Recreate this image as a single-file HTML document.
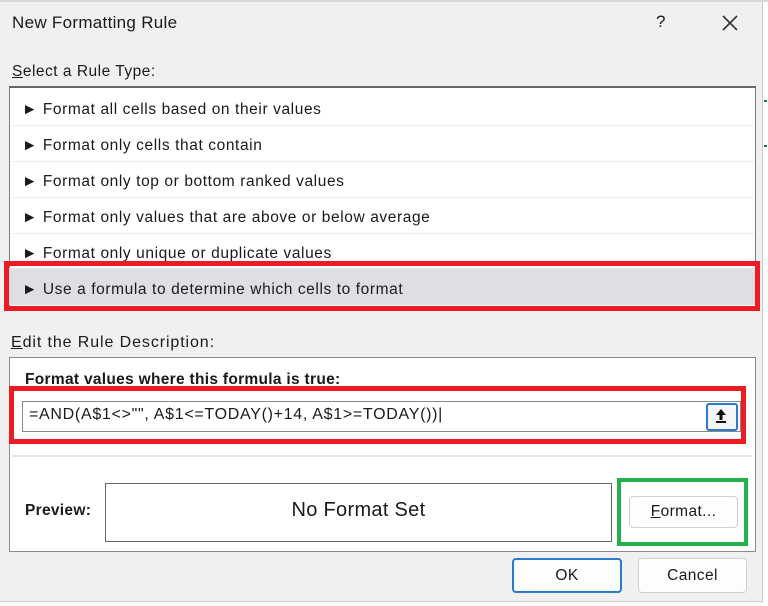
<!DOCTYPE html>
<html><head><style>
body{margin:0;width:768px;height:606px;background:#fff;position:relative;overflow:hidden;font-family:"Liberation Sans",sans-serif;color:#1a1a1a}
.a{position:absolute}
.dlg{left:0;top:0;width:762px;height:601px;background:#f0f0f0;border-right:1px solid #ccc;border-bottom:1px solid #ccc}
.t{font-size:15px;white-space:nowrap}
.row{position:absolute;left:22px;font-size:15.5px;letter-spacing:0.6px;white-space:nowrap}
.btn{position:absolute;background:#fdfdfd;border:1px solid #d0d0d0;border-radius:4px;font-size:15.5px;letter-spacing:0.4px;text-align:center}
</style></head><body>
<div class="a dlg"></div>
<div class="a" style="left:0;top:0;width:768px;height:2px;background:#d8d8d8"></div>
<div class="a t" style="left:12px;top:13px;font-size:17px;letter-spacing:0.3px">New Formatting Rule</div>
<div class="a t" style="left:656px;top:12px;font-size:17px">?</div>
<svg class="a" style="left:721px;top:14px" width="18" height="18"><path d="M2 2L16 16M16 2L2 16" stroke="#333" stroke-width="1.6"/></svg>
<div class="a" style="left:764px;top:100px;width:3px;height:2px;background:#1a7a40"></div>
<div class="a" style="left:764px;top:145px;width:3px;height:2px;background:#1a7a40"></div>
<div class="a t" style="left:12px;top:63px;font-size:15.5px;letter-spacing:0.5px"><u>S</u>elect a Rule Type:</div>
<div class="a" style="left:9px;top:86px;width:745px;height:222px;background:#fff;border:1px solid #7a7a7a;border-top:2px solid #666"></div>
<div class="a" style="left:11px;top:125px;width:743px;height:1px;background:#eee"></div>
<div class="a" style="left:11px;top:161px;width:743px;height:1px;background:#eee"></div>
<div class="a" style="left:11px;top:197px;width:743px;height:1px;background:#eee"></div>
<div class="a" style="left:11px;top:233px;width:743px;height:1px;background:#eee"></div>
<div class="a" style="left:9px;top:268px;width:746px;height:37px;background:#dfdfe3"></div>
<div class="row" style="top:101px">► Format all cells based on their values</div>
<div class="row" style="top:137px">► Format only cells that contain</div>
<div class="row" style="top:173px">► Format only top or bottom ranked values</div>
<div class="row" style="top:209px">► Format only values that are above or below average</div>
<div class="row" style="top:245px">► Format only unique or duplicate values</div>
<div class="row" style="top:281px">► Use a formula to determine which cells to format</div>
<div class="a" style="left:4px;top:261px;width:746px;height:40px;border:5px solid #ed1c24"></div>
<div class="a t" style="left:11px;top:334px;font-size:16px;letter-spacing:0.9px"><u>E</u>dit the Rule Description:</div>
<div class="a" style="left:9px;top:357px;width:745px;height:193px;background:#fff;border:1px solid #8a8a8a"></div>
<div class="a t" style="left:25px;top:371px;font-weight:bold;font-size:15.5px;letter-spacing:0.3px">Format values where this formula is true:</div>
<div class="a" style="left:22px;top:401px;width:717px;height:29px;background:#fff;border:1px solid #888"></div>
<div class="a t" style="left:29px;top:406px;font-size:16px;letter-spacing:0.7px">=AND(A$1&lt;&gt;"", A$1&lt;=TODAY()+14, A$1&gt;=TODAY())|</div>
<div class="a" style="left:706px;top:403px;width:28px;height:24px;border:2px solid #2a7ad0;border-radius:3px;background:#f5f5f5"></div>
<svg class="a" style="left:713px;top:407px" width="16" height="18"><path d="M8 2L3 8H6.5V13H9.5V8H13Z" fill="#111"/><rect x="3" y="14" width="10" height="2" fill="#111"/></svg>
<div class="a" style="left:9px;top:386px;width:727px;height:48px;border:5px solid #ed1c24"></div>
<div class="a" style="left:12px;top:455px;width:740px;height:2px;background:#e2e2e2"></div>
<div class="a t" style="left:25px;top:502px;font-weight:bold;font-size:15.5px;letter-spacing:0.3px">Preview:</div>
<div class="a" style="left:105px;top:483px;width:505px;height:57px;background:#fff;border:1px solid #666"></div>
<div class="a t" style="left:105px;top:499px;width:507px;text-align:center;font-size:20px;letter-spacing:0.3px">No Format Set</div>
<div class="btn" style="left:629px;top:496px;width:107px;height:30px;line-height:30px"><u>F</u>ormat...</div>
<div class="a" style="left:617px;top:478px;width:123px;height:60px;border:4px solid #22b14c"></div>
<div class="btn" style="left:512px;top:558px;width:106px;height:31px;line-height:31px;border:2px solid #2a7ad0">OK</div>
<div class="btn" style="left:638px;top:558px;width:107px;height:33px;line-height:33px">Cancel</div>
</body></html>
